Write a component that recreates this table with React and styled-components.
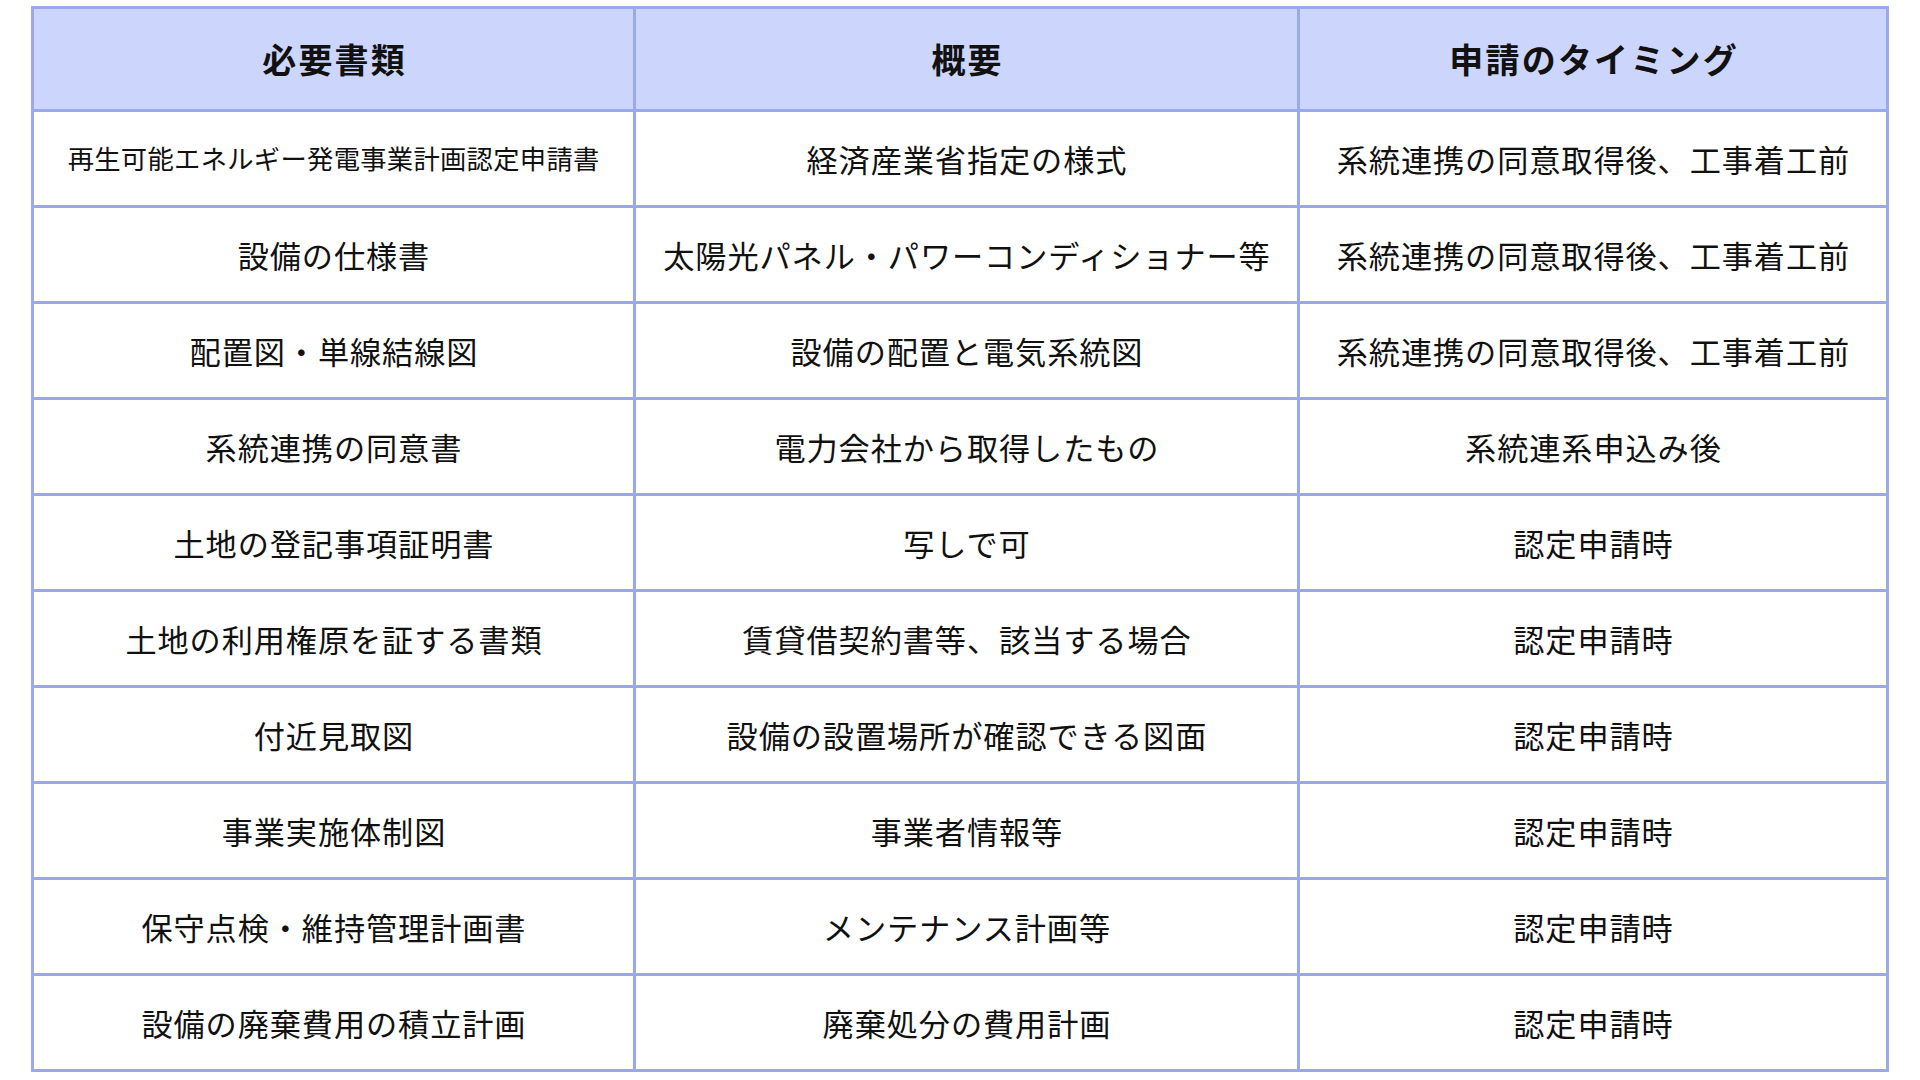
import React from "react";
import styled, { createGlobalStyle } from "styled-components";

const Global = createGlobalStyle`
  html, body { margin: 0; padding: 0; background: #ffffff; }
  body { font-family: "Noto Sans CJK JP", "Noto Sans", sans-serif; color: #111111; }
`;

const Page = styled.div`
  padding: 6px 0 0 31px;
`;

const Table = styled.div`
  display: inline-flex;
  flex-direction: column;
  border-top: 3px solid #9aa9ee;
  border-left: 3px solid #9aa9ee;
`;

const Row = styled.div`
  display: flex;
`;

const widths = [602, 664, 589];

const Cell = styled.div`
  box-sizing: border-box;
  width: ${(p) => widths[p.$col]}px;
  height: ${(p) => (p.$head ? 103 : 96)}px;
  border-right: 3px solid #9aa9ee;
  border-bottom: 3px solid #9aa9ee;
  background: ${(p) => (p.$head ? "#ccd5fc" : "#ffffff")};
  display: flex;
  align-items: center;
  justify-content: center;
  text-align: center;
  white-space: nowrap;
  font-size: ${(p) => (p.$head ? 34 : p.$small ? 26.3 : 31.2)}px;
  font-weight: ${(p) => (p.$head ? 700 : 400)};
  letter-spacing: ${(p) => (p.$head ? "2.2px" : p.$small ? "0.3px" : "0.9px")};
  text-indent: ${(p) => (p.$head ? "2.2px" : p.$small ? "0.3px" : "0.9px")};
  line-height: 1;
  color: #111111;
`;

const head = ["必要書類", "概要", "申請のタイミング"];

const rows = [
  ["再生可能エネルギー発電事業計画認定申請書", "経済産業省指定の様式", "系統連携の同意取得後、工事着工前"],
  ["設備の仕様書", "太陽光パネル・パワーコンディショナー等", "系統連携の同意取得後、工事着工前"],
  ["配置図・単線結線図", "設備の配置と電気系統図", "系統連携の同意取得後、工事着工前"],
  ["系統連携の同意書", "電力会社から取得したもの", "系統連系申込み後"],
  ["土地の登記事項証明書", "写しで可", "認定申請時"],
  ["土地の利用権原を証する書類", "賃貸借契約書等、該当する場合", "認定申請時"],
  ["付近見取図", "設備の設置場所が確認できる図面", "認定申請時"],
  ["事業実施体制図", "事業者情報等", "認定申請時"],
  ["保守点検・維持管理計画書", "メンテナンス計画等", "認定申請時"],
  ["設備の廃棄費用の積立計画", "廃棄処分の費用計画", "認定申請時"],
];

export default function App() {
  return (
    <Page>
      <Global />
      <Table>
        <Row>
          {head.map((h, i) => (
            <Cell key={i} $col={i} $head>
              {h}
            </Cell>
          ))}
        </Row>
        {rows.map((r, ri) => (
          <Row key={ri}>
            {r.map((c, ci) => (
              <Cell key={ci} $col={ci} $small={c.length > 18 && ci === 0}>
                {c}
              </Cell>
            ))}
          </Row>
        ))}
      </Table>
    </Page>
  );
}
